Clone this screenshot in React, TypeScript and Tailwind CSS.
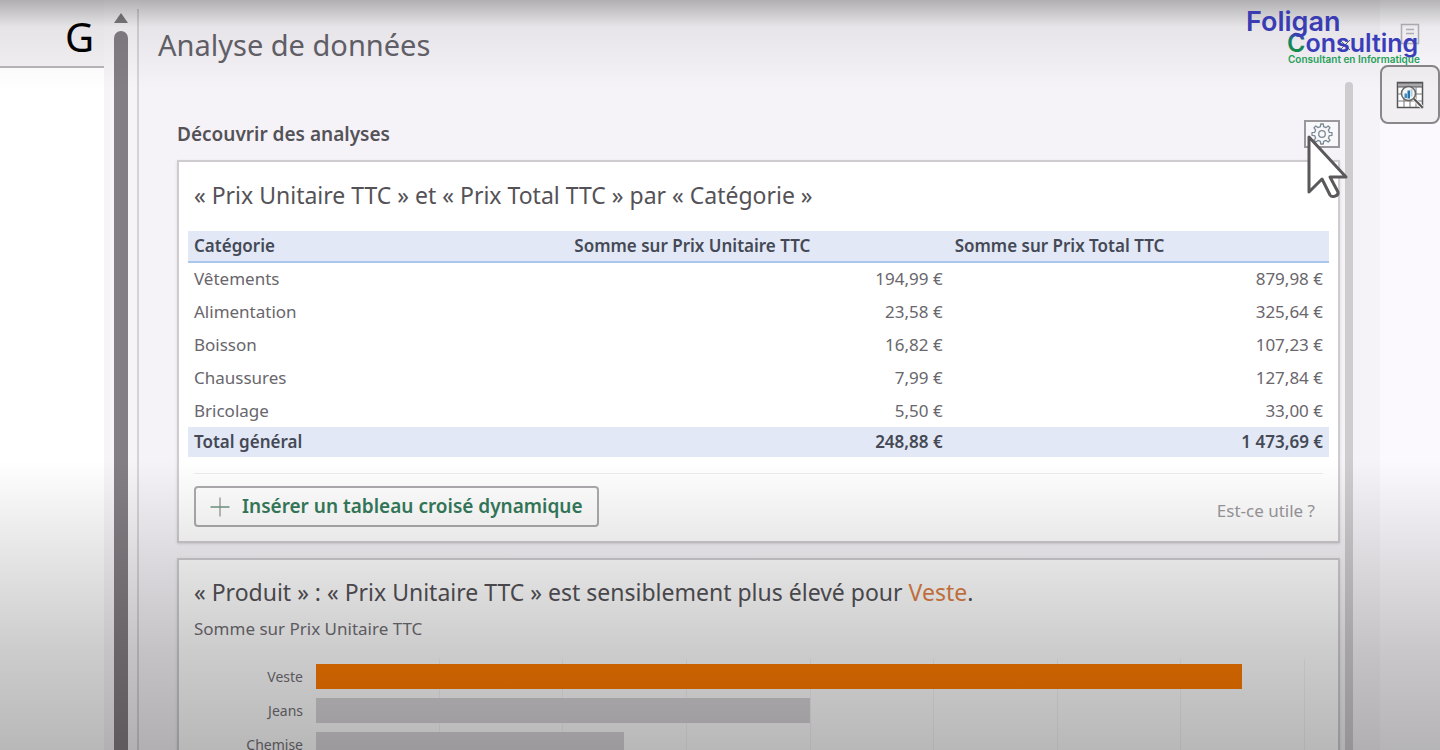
import type { ReactNode } from "react";

const rows = [
  ["Vêtements", "194,99 €", "879,98 €"],
  ["Alimentation", "23,58 €", "325,64 €"],
  ["Boisson", "16,82 €", "107,23 €"],
  ["Chaussures", "7,99 €", "127,84 €"],
  ["Bricolage", "5,50 €", "33,00 €"],
];

const bars = [
  { label: "Veste", percent: 93.6, color: "bg-[#ff7b00]" },
  { label: "Jeans", percent: 49.9, color: "bg-[#d8d5d9]" },
  { label: "Chemise", percent: 31.1, color: "bg-[#d8d5d9]" },
];

function Card({ children }: { children: ReactNode }) {
  return (
    <section className="border-2 border-[#cfccd0] bg-white shadow-sm">{children}</section>
  );
}

function GearIcon() {
  return (
    <svg viewBox="0 0 24 24" className="size-6" fill="none" stroke="#7b8a94" strokeWidth="1.3" strokeLinejoin="round">
      <path d="M10.4 4.6 10.7 2h2.6l.3 2.6 2.5 1 2.1-1.6 1.8 1.8-1.6 2.1 1 2.5 2.6.3v2.6l-2.6.3-1 2.5 1.6 2.1-1.8 1.8-2.1-1.6-2.5 1-.3 2.6h-2.6l-.3-2.6-2.5-1L5.8 20 4 18.2l1.6-2.1-1-2.5L2 13.3v-2.6l2.6-.3 1-2.5L4 5.8 5.8 4l2.1 1.6z" />
      <circle cx="12" cy="12" r="3.3" />
    </svg>
  );
}

function AnalyzeIcon() {
  return (
    <svg viewBox="0 0 28 28" className="size-7" fill="none">
      <path d="M1.5 1.5h25v25h-25z" fill="#fff" stroke="#555" strokeWidth="1.5" />
      <path d="M1.5 2h25v4h-25z" fill="#aaa" stroke="#555" />
      <path d="M1.5 13h25M1.5 20h25M8 6v20M14 6v20M20 6v20" stroke="#777" />
      <circle cx="12.5" cy="12.5" r="7" fill="#f4f6f8" stroke="#666" strokeWidth="1.5" />
      <path d="M8.5 12.5h2.5v4.500h-2.5z" fill="#3c8fc4" />
      <path d="M11.5 9.500h2.5v8h-2.5z" fill="#2874a6" />
      <path d="M14.5 8h2v7.500h-2z" fill="#b5cfdf" />
      <path d="m17.8 17.8 8.5 8.5" stroke="#eee" strokeWidth="4" />
      <path d="m17.8 17.8 8.7 8.7" stroke="#555" strokeWidth="2" />
    </svg>
  );
}

function Logo() {
  return (
    <svg viewBox="0 0 180 66" className="h-[66px] w-[180px]" role="img" aria-label="Foligan Consulting">
      <defs>
        <linearGradient id="brandC" gradientUnits="userSpaceOnUse" x1="58" y1="31" x2="54" y2="49">
          <stop offset="0.1" stopColor="#3a3fb4" />
          <stop offset="0.4" stopColor="#12806a" />
          <stop offset="1" stopColor="#178a4c" />
        </linearGradient>
      </defs>
      <g fontFamily="Inter, sans-serif" fontWeight="600">
        <text x="3" y="28" fontSize="27" fill="#3a3db2">Foligan</text>
        <text x="44" y="49" fontSize="25" fill="#3a3dba"><tspan fill="url(#brandC)">C</tspan>onsulting</text>
        <text x="45" y="60" fontSize="10" fill="#1fa05a">Consultant en Informatique</text>
      </g>
    </svg>
  );
}

export default function App() {
  return (
    <div className="relative flex h-screen overflow-hidden bg-[#f5f3f7] font-['Noto_Sans','Open_Sans',sans-serif] text-[#545257]">
      <div className="flex w-[104px] shrink-0 flex-col bg-white">
        <div className="flex h-[68px] items-center justify-end border-b-2 border-[#b9b6ba] bg-[#f4f2f5] pt-2 pr-2.5 text-[40px] text-black">
          G
        </div>
      </div>

      <div className="flex w-[35px] shrink-0 flex-col items-end bg-[#f7f4f8] pt-[9px]">
        <div className="flex w-[25px] flex-1 justify-between border-r-2 border-[#d6d3d8] pt-1">
          <div className="flex w-[14px] flex-col">
            <svg viewBox="0 0 14 10" className="mb-2 h-[10px] w-[14px]">
              <path d="M7 0 14 10H0z" fill="#7f7b80" />
            </svg>
            <div className="flex-1 rounded-t-full bg-[#837e83]" />
          </div>
        </div>
      </div>

      <main className="flex min-w-0 flex-1 flex-col">
        <header className="flex h-[82px] shrink-0 items-center justify-between pt-2 pr-[25px] pl-[19px]">
          <h1 className="text-[29px] text-[#64626a]">Analyse de données</h1>
          <button aria-label="Fermer" className="p-1">
            <svg viewBox="0 0 12 12" className="size-3" stroke="#666" fill="none">
              <path d="m1 1 10 10M11 1 1 11" />
            </svg>
          </button>
        </header>

        <div className="flex min-h-0 flex-1 gap-[5px] pr-[27px] pl-[38px]">
          <div className="flex min-w-0 flex-1 flex-col pt-[38px]">
            <div className="mb-3 flex h-7 shrink-0 items-center justify-between">
              <h2 className="text-[19px] font-semibold">Découvrir des analyses</h2>
              <button aria-label="Paramètres" className="flex h-7 w-9 items-center justify-center border-2 border-[#9a989c] bg-[#f8f7fa]">
                <GearIcon />
              </button>
            </div>

            <Card>
              <h3 className="mt-[18px] px-[15px] text-[23px] leading-[30px]">« Prix Unitaire TTC » et « Prix Total TTC » par « Catégorie »</h3>
              <div className="mt-[21px] px-[9px]">
                <table className="w-full table-fixed border-collapse text-[17px] leading-6">
                  <thead>
                    <tr className="h-[31px] border-b-2 border-[#a9c6ec] bg-[#e2e8f6] text-left text-[#454955]">
                      <th className="px-1.5 py-0 font-semibold">Catégorie</th>
                      <th className="px-1.5 py-0 font-semibold">Somme sur Prix Unitaire TTC</th>
                      <th className="px-1.5 py-0 font-semibold">Somme sur Prix Total TTC</th>
                    </tr>
                  </thead>
                  <tbody>
                    {rows.map(([name, unit, total]) => (
                      <tr key={name} className="h-[33px] text-[#69666c]">
                        <td className="px-1.5 py-0">{name}</td>
                        <td className="px-1.5 py-0 text-right">{unit}</td>
                        <td className="px-1.5 py-0 text-right">{total}</td>
                      </tr>
                    ))}
                  </tbody>
                  <tfoot>
                    <tr className="h-[30px] bg-[#e2e8f6] font-semibold text-[#454955]">
                      <td className="px-1.5 py-0">Total général</td>
                      <td className="px-1.5 py-0 text-right">248,88 €</td>
                      <td className="px-1.5 py-0 text-right">1 473,69 €</td>
                    </tr>
                  </tfoot>
                </table>
              </div>
              <div className="mx-[15px] mt-4 flex items-center justify-between border-t border-[#eeebef] pt-3 pb-[14px]">
                <button className="flex h-[41px] items-center gap-3 rounded border-2 border-[#adabae] px-[14px] text-[19px] font-semibold text-[#347a5a]">
                  <svg viewBox="0 0 20 20" className="size-5" fill="none">
                    <path d="M10 0.5v19" stroke="#a5a5a7" strokeWidth="1.5" />
                    <path d="M0.5 10h19" stroke="#6d9582" strokeWidth="1.5" />
                  </svg>
                  Insérer un tableau croisé dynamique
                </button>
                <a href="#utile" className="mt-2 mr-2 text-[17px] leading-6 text-[#9b989d]">Est-ce utile ?</a>
              </div>
            </Card>

            <div className="mt-[15px]">
              <Card>
                <h3 className="mt-[17px] px-[15px] text-[23px] leading-[30px]">
                  « Produit » : « Prix Unitaire TTC » est sensiblement plus élevé pour <span className="text-[#dd7f48]">Veste</span>.
                </h3>
                <p className="mt-[10px] px-[15px] text-[17px] leading-6 text-[#716e74]">Somme sur Prix Unitaire TTC</p>
                <div className="relative mt-[18px] mr-[33px] ml-[15px]">
                  <div className="absolute inset-y-0 right-0 left-[122px] grid grid-cols-8">
                    {Array.from({ length: 8 }, (_, i) => (
                      <div key={i} className="border-r border-[#f5f2f6]" />
                    ))}
                  </div>
                  <div className="relative flex flex-col gap-[9px] pt-[5px] pb-9">
                    {bars.map((b) => (
                      <div key={b.label} className="flex h-[25px] items-center">
                        <span className="mr-[13px] w-[109px] text-right text-[14px] leading-5 text-[#747177]">{b.label}</span>
                        <div className="h-full flex-1">
                          <div className={`h-full ${b.color}`} style={{ width: `${b.percent}%` }} />
                        </div>
                      </div>
                    ))}
                  </div>
                </div>
              </Card>
            </div>
          </div>
          <div className="w-2 shrink-0 rounded-t-full bg-[#cfccd0]" />
        </div>
      </main>

      <aside className="flex w-[60px] shrink-0 flex-col items-center bg-[#fbf9fd]">
        <button aria-label="Commentaires" className="mt-[23px] mb-5">
          <svg viewBox="0 0 20 22" className="h-[22px] w-5" fill="none" stroke="#b9b6bb" strokeWidth="1.5">
            <path d="M1.5 1.5h17v19h-17zM6 6.5h8M6 10.5h8" />
          </svg>
        </button>
        <button aria-label="Analyse de données" className="flex h-[59px] w-full items-center justify-center rounded-lg border-2 border-[#8a878b] bg-[#f1eff2]">
          <AnalyzeIcon />
        </button>
      </aside>

      <div className="pointer-events-none absolute inset-x-0 top-0 h-[90px] bg-linear-to-b from-black/28 via-black/6 via-30% to-transparent" />
      <div className="pointer-events-none absolute inset-x-0 bottom-0 h-[290px] bg-[linear-gradient(to_bottom,transparent,rgb(0_0_0/0.1)_33%,rgb(0_0_0/0.2)_66%,rgb(0_0_0/0.28))]" />

      <div className="pointer-events-none absolute top-[3px] right-[17px]">
        <Logo />
      </div>
      <svg viewBox="0 0 44 68" className="pointer-events-none absolute top-[133px] right-[90px] h-[68px] w-11">
        <path d="M3 4v55l13-13 8 16c2 3 9 1 8-3l-8-15h16z" fill="#fff" stroke="#5a585b" strokeWidth="3" strokeLinejoin="round" />
      </svg>
    </div>
  );
}
